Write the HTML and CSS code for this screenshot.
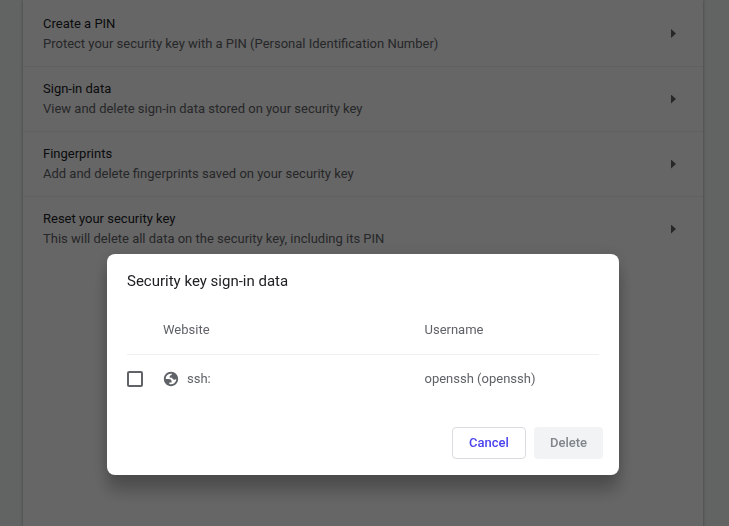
FILE: index.html
```html
<!DOCTYPE html>
<html lang="en">
<head>
<meta charset="utf-8">
<title>Security keys</title>
<link rel="stylesheet" href="styles.css">
</head>
<body>
<main class="card">
  <div class="row"><div class="label"><div class="name">Create a PIN</div><div class="sub">Protect your security key with a PIN (Personal Identification Number)</div></div><span class="arrow"></span></div>
  <div class="row"><div class="label"><div class="name">Sign-in data</div><div class="sub">View and delete sign-in data stored on your security key</div></div><span class="arrow"></span></div>
  <div class="row"><div class="label"><div class="name">Fingerprints</div><div class="sub">Add and delete fingerprints saved on your security key</div></div><span class="arrow"></span></div>
  <div class="row"><div class="label"><div class="name">Reset your security key</div><div class="sub">This will delete all data on the security key, including its PIN</div></div><span class="arrow"></span></div>
</main>
<div class="backdrop">
  <section class="dialog" role="dialog" aria-labelledby="dialog-title">
    <h1 class="title" id="dialog-title">Security key sign-in data</h1>
    <div class="table">
      <div class="line head"><span></span><span>Website</span><span>Username</span></div>
      <div class="line">
        <span class="checkbox" role="checkbox" aria-checked="false"></span>
        <span class="site"><svg class="globe" viewBox="0 0 24 24"><path fill-rule="evenodd" d="M12 1.300C6.090 1.300 1.300 6.090 1.300 12s4.790 10.700 10.700 10.700 10.700-4.790 10.700-10.700S17.910 1.300 12 1.300zM4 12h4.400c3.407.022 4.922 1.730 4.543 5.127H9.488v2.470a8.004 8.004 0 0 0 10.498-8.083C19.327 12.504 18.332 13 17 13c-2.137 0-3.206-.916-3.206-2.750h-3.748c-.274-2.728.683-4.092 2.870-4.092 0-.975.327-1.597.811-1.970A8.004 8.004 0 0 0 4 12z"/></svg>ssh:</span>
        <span>openssh (openssh)</span>
      </div>
    </div>
    <div class="actions"><button class="button cancel">Cancel</button><button class="button delete" disabled>Delete</button></div>
  </section>
</div>
</body>
</html>
```
FILE: styles.css
```css
* { box-sizing: border-box; }
body {
  margin: 0;
  height: 526px;
  overflow: hidden;
  background: #f5faf7;
  font: 13px/20px Roboto, sans-serif;
  color: #5f6368;
}
.card {
  width: 680px;
  height: 526px;
  margin-left: 23px;
  padding-top: 1px;
  background: #fff;
  box-shadow: 0 1px 2px rgba(60, 64, 67, .3), 0 1px 3px 1px rgba(60, 64, 67, .15);
}
.row {
  display: flex;
  align-items: center;
  justify-content: space-between;
  height: 65px;
  padding: 0 27px 0 20px;
}
.row + .row { border-top: 1px solid rgba(0, 0, 0, .06); }
.name { color: #202124; }
.arrow {
  width: 5px;
  height: 9px;
  background: #5f6368;
  clip-path: polygon(0 0, 100% 50%, 0 100%);
}
.backdrop {
  position: fixed;
  inset: 0;
  display: flex;
  align-items: flex-start;
  padding: 254px 0 0 107px;
  background: rgba(0, 0, 0, .6);
}
.dialog {
  width: 512px;
  height: 221px;
  padding: 16px 16px 16px 20px;
  display: flex;
  flex-direction: column;
  border-radius: 8px;
  background: #fff;
  box-shadow: 0 0 16px rgba(0, 0, 0, .12), 0 16px 16px rgba(0, 0, 0, .24);
}
.title {
  margin: 0;
  font-size: 15px;
  font-weight: 400;
  line-height: 23px;
  color: #202124;
}
.table { width: 472px; margin-top: 12px; }
.line {
  display: grid;
  grid-template-columns: 36px 261.5px 1fr;
  align-items: center;
  height: 48px;
}
.head { height: 50px; border-bottom: 1px solid rgba(0, 0, 0, .06); }
.checkbox {
  width: 16px;
  height: 16px;
  border: 2px solid #5f6368;
  border-radius: 2px;
}
.site { display: flex; align-items: center; gap: 8px; }
.globe { width: 16px; height: 16px; fill: #5f6368; }
.actions { display: flex; justify-content: flex-end; gap: 8px; margin-top: auto; }
.button {
  height: 32px;
  padding: 0 16px;
  border: 1px solid #dadce0;
  border-radius: 4px;
  font: 500 13px/20px Roboto, sans-serif;
}
.cancel { width: 74px; background: #fff; color: #4b43ee; }
.delete { width: 69px; padding: 0; border: 0; background: #f1f3f4; color: #80868b; }
```
